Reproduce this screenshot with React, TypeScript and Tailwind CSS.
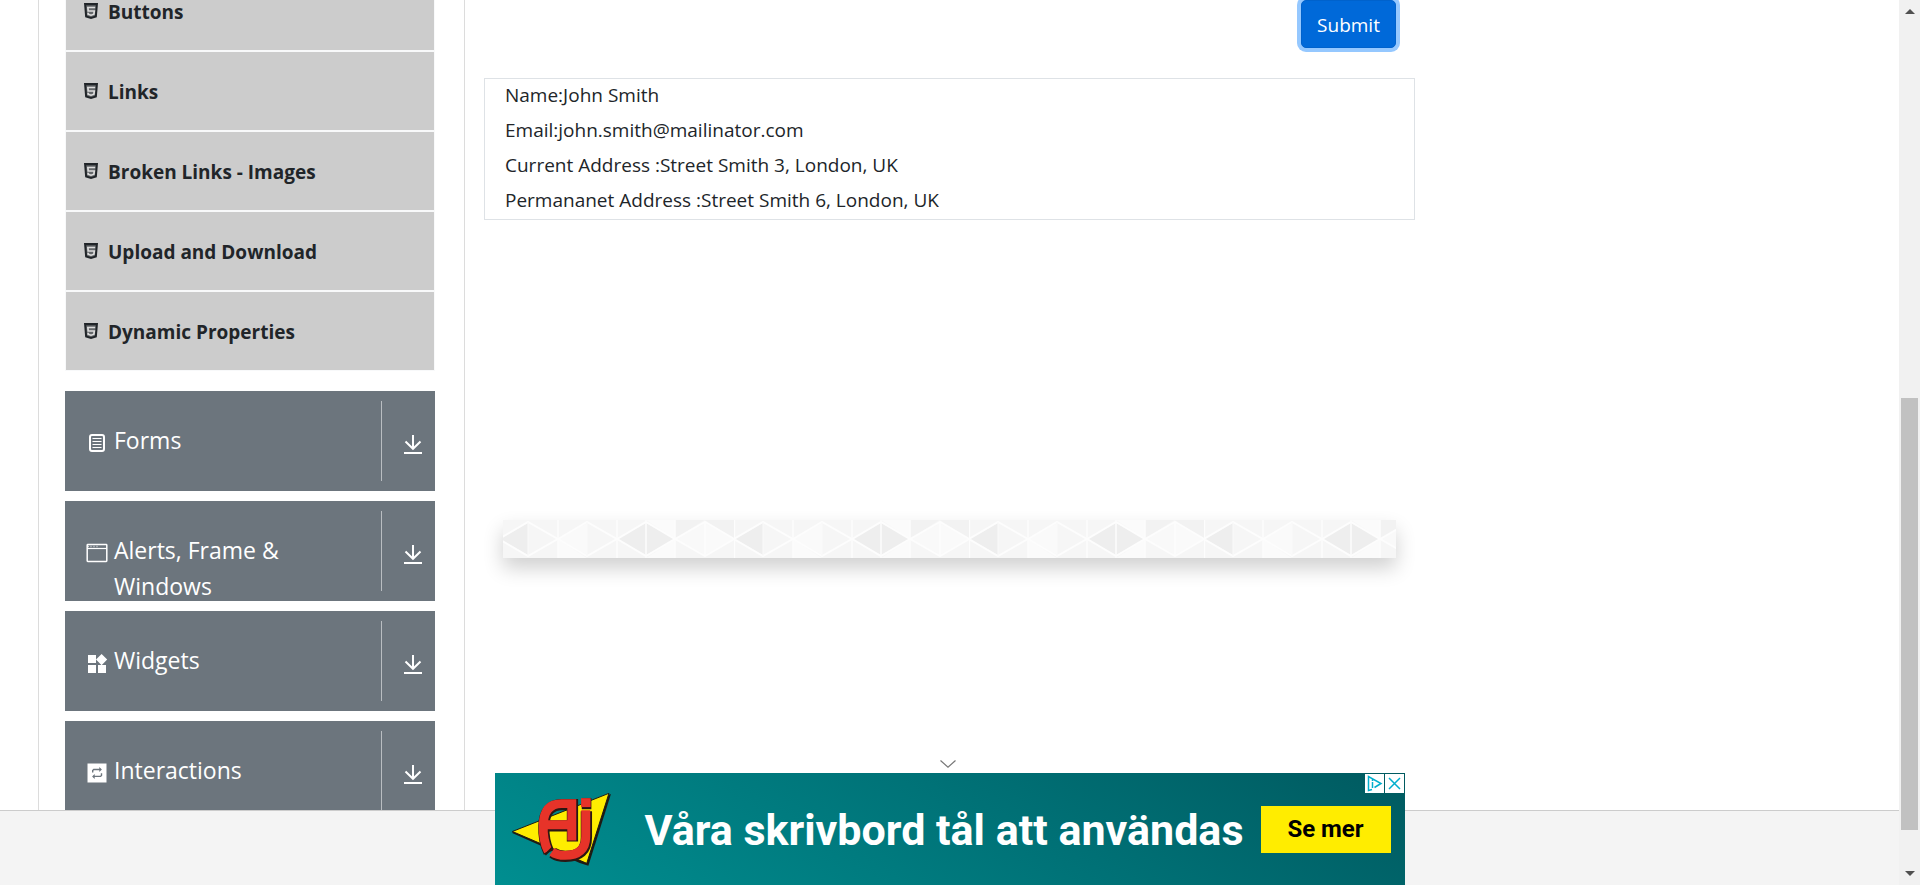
import type { ReactNode } from "react";

const links = ["Buttons", "Links", "Broken Links - Images", "Upload and Download", "Dynamic Properties"];

const output = [
  "Name:John Smith",
  "Email:john.smith@mailinator.com",
  "Current Address :Street Smith 3, London, UK",
  "Permananet Address :Street Smith 6, London, UK",
];

function HtmlIcon() {
  return (
    <svg viewBox="0 0 14 16" className="h-4 w-3.5 shrink-0" aria-hidden="true">
      <path d="M0 0h14l-1.200 14.200L7 16l-5.800-1.800z" fill="#212529" />
      <path d="M2.200 2.200h9.600l-.9 10.600L7 14l-3.900-1.200z" fill="#64676a" />
      <path d="M11.200 4.500H3.900l.3 3.500h6.100l-.4 3.200L7 12.200l-2.800-1-.1-1.500" fill="none" stroke="#dcdcdc" strokeWidth="1.700" />
    </svg>
  );
}

function FormsIcon() {
  return (
    <svg viewBox="0 0 22 22" className="size-[22px]" fill="none" stroke="currentColor" aria-hidden="true">
      <rect x="4" y="3" width="14" height="16" rx="2" strokeWidth="2" />
      <path d="M6.500 6.500h9M6.500 9.500h9M6.500 12.500h9M6.500 15.500h9" strokeWidth="1.100" />
    </svg>
  );
}

function WindowIcon() {
  return (
    <svg viewBox="0 0 22 22" className="size-[22px]" fill="none" stroke="currentColor" aria-hidden="true">
      <rect x="1.200" y="2.600" width="19.600" height="16.800" rx=".6" strokeWidth="1.500" />
      <path d="M1 6.500h20" strokeWidth="1.200" />
      <path d="M2 4.500h1M4.500 4.500h1M7.500 4.500h1M10.500 4.500h1" strokeWidth="1.500" opacity=".7" />
    </svg>
  );
}

function WidgetsIcon() {
  return (
    <svg viewBox="0 0 22 22" className="size-[22px]" fill="currentColor" aria-hidden="true">
      <path d="M2 3h8v8H2zM2 13h8v8H2zM12 13h8v8h-8zM15.600 2l5.600 5.600-5.600 5.600L10 7.600z" />
    </svg>
  );
}

function RepeatIcon() {
  return (
    <svg viewBox="0 0 22 22" className="size-[22px]" aria-hidden="true">
      <path d="M1.500 1.500h19v19h-19z" fill="currentColor" />
      <path d="M6.700 10.500V8.500l1-1H14M15.500 11.200v2.200l-1 1H8" fill="none" stroke="#6c757d" strokeWidth="1.400" />
      <path d="M13.300 5l2.600 2.500-2.600 2.500zM8.700 11.900l-2.600 2.500 2.600 2.500z" fill="#6c757d" />
    </svg>
  );
}

function DownloadIcon() {
  return (
    <svg viewBox="0 0 18 20" className="h-5 w-[18px]" fill="none" stroke="currentColor" aria-hidden="true">
      <path d="M9 0v14M1.500 6.500L9 13.800l7.500-7.300" strokeWidth="2" />
      <path d="M0 18h18" strokeWidth="2" />
    </svg>
  );
}

const groups: { name: string; icon: ReactNode }[] = [
  { name: "Forms", icon: <FormsIcon /> },
  { name: "Alerts, Frame & Windows", icon: <WindowIcon /> },
  { name: "Widgets", icon: <WidgetsIcon /> },
  { name: "Interactions", icon: <RepeatIcon /> },
];

function Sidebar() {
  return (
    <aside className="w-[427px] shrink-0 border-x border-[#dcdcdc] pl-[26px] pr-[29px]">
      <ul className="-mt-[30px] mb-5 border border-[#f8f9fa]">
        {links.map((name) => (
          <li key={name} className="border-t-2 border-[#f8f9fa] first:border-t-0 first:pt-px">
            <a href="#" className="flex h-[78px] items-center gap-2.5 bg-[#ccc] px-[18px] text-[19px] leading-5 font-bold">
              <HtmlIcon />
              <span className="pt-0.5">{name}</span>
            </a>
          </li>
        ))}
      </ul>
      <div className="flex flex-col gap-2.5">
        {groups.map(({ name, icon }) => (
          <button key={name} type="button" className="flex h-[100px] w-full items-start bg-[#6c757d] text-left text-white">
            <span className="flex flex-1 gap-1.5 pt-[31px] pl-[21px] pr-4 text-[23px] leading-9">
              <span className="mt-2.5 shrink-0">{icon}</span>
              <span className="w-[200px]">{name}</span>
            </span>
            <span className="mt-2.5 flex h-20 w-[54px] justify-end border-l border-[#b9bdc1] pt-[34px] pr-[13px]">
              <DownloadIcon />
            </span>
          </button>
        ))}
      </div>
    </aside>
  );
}

function TriangleStrip() {
  return (
    <div className="mx-[19px] mt-[300px] h-[38px] bg-[#f7f7f7] shadow-[0_10px_20px_rgba(0,0,0,0.19)]">
      <svg className="block h-full w-full" aria-hidden="true">
        <defs>
          <pattern id="triangles" x="-4" y="0" width="235" height="38" patternUnits="userSpaceOnUse">
            <path d="M0 0h235v38H0z" fill="#f6f6f6" />
            <path d="M59 19v19h29zM147 0h29v19zM147 38h29V19z" fill="#fbfbfb" />
            <path d="M176 0h29l-29 19zM206 0h29v19z" fill="#f2f2f2" />
            <path d="M1 19L29 3v32zM118 19l29-16v32zM147 3l29 16-29 16z" fill="#eeeeee" />
            <path d="M59 19L88 3v32zM206 3l29 16-29 16z" fill="#fafafa" />
            <path d="M176 19l30-16v32z" fill="#f9f9f9" />
            <path
              d="M0 19L29 2l30 17L88 2l30 17 29-17 29 17 30-17 29 17M0 19l29 17 30-17 29 17 30-17 29 17 29-17 30 17 29-17"
              fill="none"
              stroke="#fdfdfd"
              strokeWidth="2"
            />
            <path d="M59 0v38M118 0v38M147 0v38M176 0v38M206 2v34M.5 0v38" stroke="#fdfdfd" strokeWidth="1.500" />
            <path d="M29 2v34M88 2v34" stroke="#fafafa" strokeWidth="1" />
          </pattern>
        </defs>
        <rect width="100%" height="100%" fill="url(#triangles)" />
      </svg>
    </div>
  );
}

function Logo() {
  const letters = (
    <>
      <path d="M205 335Q188 300 190 255Q192 191 245 191H276V302M190 255H276" />
      <path d="M318 211V290Q318 347 255 347Q232 347 216 336" />
      <path d="M304 188H333" />
    </>
  );
  return (
    <svg viewBox="90 150 310 235" className="h-[78px] w-[103px] shrink-0" role="img" aria-label="AJ">
      <path d="M95 279L394 162L326 378L300 370z" fill="#1d1a14" />
      <path d="M97 275L388 160L321 371z" fill="#ffed00" stroke="#1d1a14" strokeWidth="3" />
      <g fill="none" stroke="#2a1713" strokeWidth="34" transform="translate(2 3)">{letters}</g>
      <g fill="none" stroke="#e63329" strokeWidth="27">{letters}</g>
      <path d="M196 345l22-22" stroke="#2a1713" strokeWidth="6" />
    </svg>
  );
}

function AdBanner() {
  return (
    <div className="absolute inset-x-0 bottom-0 flex flex-col items-center">
      <button type="button" aria-label="Hide advertisement" className="mb-[5px] pr-1 text-[#777]">
        <svg viewBox="0 0 16 8" className="h-2 w-4" fill="none" stroke="currentColor" strokeWidth="1.200">
          <path d="M.5.5L8 7.200l7.500-6.700" />
        </svg>
      </button>
      <div className="relative flex h-28 w-[910px] items-center bg-linear-[30deg,#008e90,#007277_55%,#005a60] pr-3.5 pl-[15px]">
        <Logo />
        <p className="flex-1 pt-0.5 pl-8 font-['Roboto',sans-serif] text-[43px] leading-[48px] font-bold whitespace-nowrap text-white">
          Våra skrivbord tål att användas
        </p>
        <button type="button" className="h-[47px] w-[130px] bg-[#ffed00] font-['Roboto',sans-serif] text-2xl font-bold text-black">
          Se mer
        </button>
        <div className="absolute top-px right-px flex gap-px text-[#00aecd]">
          <button type="button" aria-label="Ad information" className="bg-white">
            <svg viewBox="0 0 19 19" className="size-[19px]" fill="none" stroke="currentColor" strokeWidth="1.500">
              <path d="M7 15.500l-3.500 1V2.500L16 9.500l-6.500 4M7.500 8v6M7.500 5.500v1.500" />
            </svg>
          </button>
          <button type="button" aria-label="Close advertisement" className="bg-white">
            <svg viewBox="0 0 19 19" className="size-[19px]" fill="none" stroke="currentColor" strokeWidth="1.500">
              <path d="M4 4l11 11M15 4L4 15" />
            </svg>
          </button>
        </div>
      </div>
    </div>
  );
}

function Scrollbar() {
  return (
    <div className="flex w-[21px] shrink-0 flex-col items-center bg-[#f1f1f1] py-2 text-[#505050]" aria-hidden="true">
      <svg viewBox="0 0 10 6" className="h-1.5 w-2.5">
        <path d="M0 6l5-5 5 5z" fill="currentColor" />
      </svg>
      <div className="flex w-[17px] flex-1 flex-col pt-[384px] pb-[41px]">
        <div className="flex-1 bg-[#c1c1c1]" />
      </div>
      <svg viewBox="0 0 10 6" className="h-1.5 w-2.5">
        <path d="M0 0l5 5 5-5z" fill="currentColor" />
      </svg>
    </div>
  );
}

export default function App() {
  return (
    <div className="flex h-screen overflow-hidden bg-white font-['Open_Sans','Noto_Sans',sans-serif] text-[#212529]">
      <div className="relative flex min-w-0 flex-1 flex-col">
        <div className="flex min-h-0 flex-1 overflow-hidden pl-[38px]">
          <Sidebar />
          <main className="max-w-[969px] flex-1 px-[19px]">
            <div className="flex justify-end pr-[19px]">
              <button type="button" className="h-12 w-[95px] rounded-[5px] border border-[#0062cc] bg-[#0069d9] pt-0.5 text-[19px] leading-[30px] text-white ring-4 ring-[#95c8ff]">
                Submit
              </button>
            </div>
            <div className="mt-[30px] flex flex-col gap-[5px] border border-[#dee2e6] px-5 pt-px pb-1 text-[19px] leading-[30px]">
              {output.map((line) => (
                <p key={line}>{line}</p>
              ))}
            </div>
            <TriangleStrip />
          </main>
        </div>
        <footer className="h-[75px] shrink-0 border-t border-[#ccc] bg-[#f4f4f4]" />
        <AdBanner />
      </div>
      <Scrollbar />
    </div>
  );
}
